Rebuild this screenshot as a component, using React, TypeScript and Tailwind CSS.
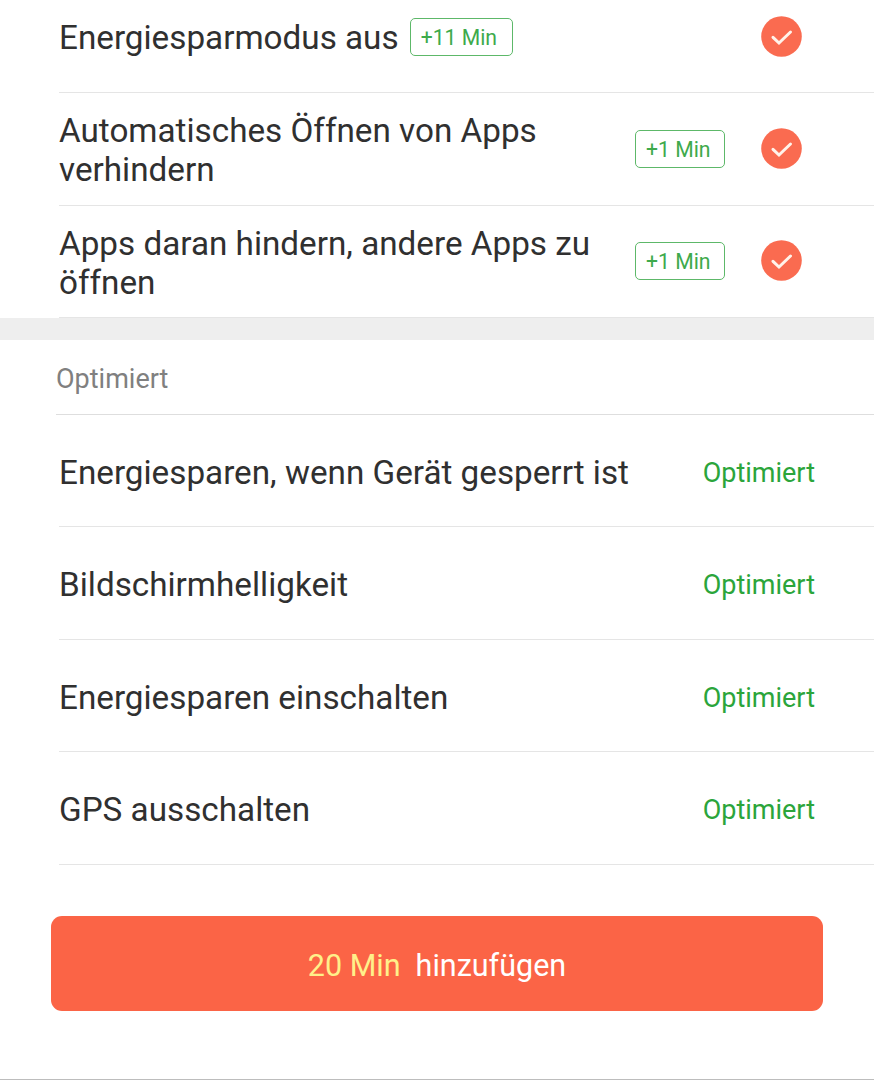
import clsx from "clsx";

type Suggestion = {
  title: string;
  gain: string;
  inline?: boolean;
};

const suggestions: Suggestion[] = [
  { title: "Energiesparmodus aus", gain: "+11 Min", inline: true },
  { title: "Automatisches Öffnen von Apps verhindern", gain: "+1 Min" },
  { title: "Apps daran hindern, andere Apps zu öffnen", gain: "+1 Min" },
];

const optimized = [
  "Energiesparen, wenn Gerät gesperrt ist",
  "Bildschirmhelligkeit",
  "Energiesparen einschalten",
  "GPS ausschalten",
];

const CheckCircle = () => (
  <svg viewBox="0 0 41 41" className="h-[41px] w-[41px] shrink-0">
    <circle cx="20.5" cy="20.5" r="20.3" fill="#fa6b50" />
    <path
      d="M12 21.3 L18 27 L29.5 16"
      fill="none"
      stroke="#fff3ea"
      strokeWidth="3"
      strokeLinecap="round"
    />
  </svg>
);

const SuggestionRow = ({ title, gain, inline }: Suggestion) => (
  <div
    className={clsx(
      "ml-[59px] flex items-center border-b border-[#e5e5e5] pr-[72px]",
      inline ? "h-[93px] pb-[19px]" : "h-[112.5px]"
    )}
  >
    <div
      className={clsx(
        "text-[33.25px] leading-[39px]",
        inline ? "mr-[11px] pt-px whitespace-nowrap" : "w-[576px] pt-[3px] pr-9"
      )}
    >
      {title}
    </div>
    <span
      className={clsx(
        "flex h-[38px] shrink-0 items-center rounded-[5px] border border-[#5db869] pt-0.5 pl-[10px] text-[21.2px] text-[#3eaa4c]",
        inline ? "w-[103px]" : "w-[90px]"
      )}
    >
      {gain}
    </span>
    <button className="mb-px ml-auto" aria-label={title}>
      <CheckCircle />
    </button>
  </div>
);

const App = () => {
  return (
    <main className="h-[1080px] w-[874px] overflow-hidden border-b border-[#bdbdbd] bg-white font-[Roboto,sans-serif] text-[#303030]">
      {/* Suggestions */}
      <section>
        {suggestions.map((item) => (
          <SuggestionRow key={item.title} {...item} />
        ))}
      </section>

      <div className="h-[22px] bg-[#eeeeee]" />

      {/* Already optimized */}
      <section>
        <h2 className="ml-14 flex h-[75px] items-center border-b border-[#dedede] pt-[5px] text-[27px] text-[#808080]">
          Optimiert
        </h2>
        {optimized.map((title) => (
          <div
            key={title}
            className="ml-[59px] flex h-[112.4px] items-center justify-between border-b border-[#e5e5e5] pt-1 pr-[59px]"
          >
            <span className="text-[33.25px]">{title}</span>
            <span className="pt-px text-[27px] text-[#2ba53b]">Optimiert</span>
          </div>
        ))}
      </section>

      <button className="mx-[51px] mt-[51px] flex h-[95px] w-[772px] items-center justify-center gap-[15px] rounded-[11px] bg-[#fb6446] pt-[5px] text-[30.5px] text-white">
        <span className="text-[#fff08a]">20 Min</span>
        <span>hinzufügen</span>
      </button>
    </main>
  );
};

export default App;
